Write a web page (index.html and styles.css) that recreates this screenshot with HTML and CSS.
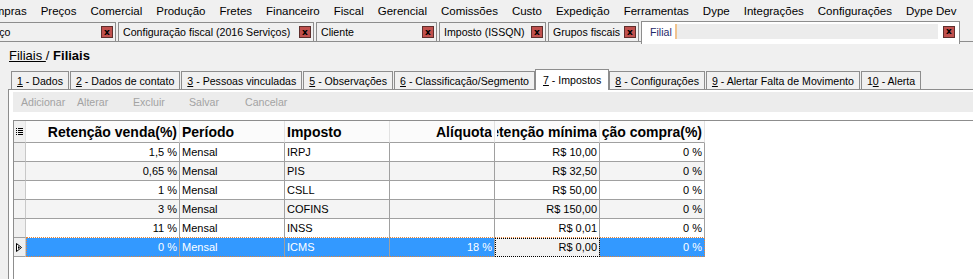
FILE: index.html
```html
<!DOCTYPE html>
<html lang="pt-BR">
<head>
  <meta charset="UTF-8">
  <meta name="viewport" content="width=device-width, initial-scale=1.0">
  <title>Filiais - Impostos</title>
  <link rel="stylesheet" href="styles.css">
</head>
<body>

  <div class="menubar">
    <span>Compras</span>
    <span>Preços</span>
    <span>Comercial</span>
    <span>Produção</span>
    <span>Fretes</span>
    <span>Financeiro</span>
    <span>Fiscal</span>
    <span>Gerencial</span>
    <span>Comissões</span>
    <span>Custo</span>
    <span>Expedição</span>
    <span>Ferramentas</span>
    <span>Dype</span>
    <span>Integrações</span>
    <span>Configurações</span>
    <span>Dype Dev</span>
  </div>

  <div class="doctabs">
    <div class="doctab"><span class="doctab-title">Serviço</span><span class="close">x</span></div>
    <div class="doctab"><span class="doctab-title">Configuração fiscal (2016 Serviços)</span><span class="close">x</span></div>
    <div class="doctab"><span class="doctab-title">Cliente</span><span class="close">x</span></div>
    <div class="doctab"><span class="doctab-title">Imposto (ISSQN)</span><span class="close">x</span></div>
    <div class="doctab"><span class="doctab-title">Grupos fiscais</span><span class="close">x</span></div>
    <div class="doctab active"><span class="doctab-title">Filial</span><span class="masked"></span><span class="close">x</span></div>
  </div>

  <div class="crumb"><a href="#">Filiais </a> / <b>Filiais</b></div>

  <div class="tabs">
    <div class="tab"><span><u>1</u> - Dados</span></div>
    <div class="tab"><span><u>2</u> - Dados de contato</span></div>
    <div class="tab"><span><u>3</u> - Pessoas vinculadas</span></div>
    <div class="tab"><span><u>5</u> - Observações</span></div>
    <div class="tab"><span><u>6</u> - Classificação/Segmento</span></div>
    <div class="tab active"><span><u>7</u> - Impostos</span></div>
    <div class="tab"><span><u>8</u> - Configurações</span></div>
    <div class="tab"><span><u>9</u> - Alertar Falta de Movimento</span></div>
    <div class="tab"><span>1<u>0</u> - Alerta</span></div>
  </div>

  <div class="panel">
    <div class="toolbar">
      <button disabled>Adicionar</button>
      <button disabled>Alterar</button>
      <button disabled>Excluir</button>
      <button disabled>Salvar</button>
      <button disabled>Cancelar</button>
    </div>

    <div class="grid-wrap">
      <table class="grid">
        <colgroup>
          <col class="c-ind"><col class="c-wide"><col><col><col><col><col>
        </colgroup>
        <thead>
          <tr>
            <th class="ind">
              <svg width="8" height="8" viewBox="0 0 8 8">
                <rect x="0" y="0" width="1" height="1" fill="#000"/><rect x="2" y="0" width="5" height="1" fill="#000"/>
                <rect x="0" y="2" width="1" height="1" fill="#000"/><rect x="2" y="2" width="5" height="1" fill="#000"/>
                <rect x="0" y="4" width="1" height="1" fill="#000"/><rect x="2" y="4" width="5" height="1" fill="#000"/>
                <rect x="0" y="6" width="1" height="1" fill="#000"/><rect x="2" y="6" width="5" height="1" fill="#000"/>
              </svg>
            </th>
            <th><div class="hd r">Retenção venda(%)</div></th>
            <th><div class="hd">Período</div></th>
            <th><div class="hd">Imposto</div></th>
            <th><div class="hd r">Alíquota</div></th>
            <th><div class="hd r">Retenção mínima</div></th>
            <th><div class="hd r">Retenção compra(%)</div></th>
          </tr>
        </thead>
        <tbody>
          <tr>
            <td class="ind"></td><td class="r">1,5 %</td><td>Mensal</td><td>IRPJ</td><td class="r"></td><td class="r">R$ 10,00</td><td class="r">0 %</td>
          </tr>
          <tr>
            <td class="ind"></td><td class="r">0,65 %</td><td>Mensal</td><td>PIS</td><td class="r"></td><td class="r">R$ 32,50</td><td class="r">0 %</td>
          </tr>
          <tr>
            <td class="ind"></td><td class="r">1 %</td><td>Mensal</td><td>CSLL</td><td class="r"></td><td class="r">R$ 50,00</td><td class="r">0 %</td>
          </tr>
          <tr>
            <td class="ind"></td><td class="r">3 %</td><td>Mensal</td><td>COFINS</td><td class="r"></td><td class="r">R$ 150,00</td><td class="r">0 %</td>
          </tr>
          <tr class="before-sel">
            <td class="ind"></td><td class="r">11 %</td><td>Mensal</td><td>INSS</td><td class="r"></td><td class="r">R$ 0,01</td><td class="r">0 %</td>
          </tr>
          <tr class="sel">
            <td class="ind">
              <svg width="7" height="9" viewBox="0 0 7 9">
                <polygon points="0.5,0.5 5.5,4.5 0.5,8.5" fill="#fff" stroke="#000" stroke-width="1"/>
                <polygon points="2,3 4,4.5 2,6" fill="#000"/>
              </svg>
            </td>
            <td class="r">0 %</td><td>Mensal</td><td>ICMS</td><td class="r">18 %</td><td class="r focus">R$ 0,00</td><td class="r">0 %</td>
          </tr>
        </tbody>
      </table>
    </div>
  </div>

</body>
</html>
```

FILE: styles.css
```css
* {
  box-sizing: border-box;
}

body {
  margin: 0;
  width: 973px;
  height: 279px;
  overflow: hidden;
  background-color: #f0f0f0;
  font-family: "Liberation Sans", Arial, sans-serif;
  font-size: 11px;
  color: #000;
}

/* menu principal */
.menubar {
  display: flex;
  align-items: center;
  height: 21px;
  margin-left: -27px;
  white-space: nowrap;
  font-size: 11.5px;
}

.menubar span {
  padding: 0 7px;
}

/* abas de documentos */
.doctabs {
  display: flex;
  align-items: flex-end;
  height: 21px;
  margin-left: -30px;
  border-bottom: 1px solid #8d8d8d;
}

.doctab {
  display: flex;
  align-items: center;
  height: 19px;
  margin-right: 2px;
  padding: 0 2px 0 4px;
  border: 1px solid #8d8d8d;
  border-bottom: none;
  font-size: 10.6px;
  white-space: nowrap;
}

.doctab:nth-child(1) { width: 146px; }
.doctab:nth-child(2) { width: 196px; }
.doctab:nth-child(3) { width: 121px; }
.doctab:nth-child(4) { width: 107px; }
.doctab:nth-child(5) { width: 91px; }

.doctab-title {
  flex: 1;
  overflow: hidden;
}

.doctab.active {
  width: 319px;
  height: 23px;
  margin-bottom: -3px;
  padding: 0 4px 3px 8px;
  background-color: #fff;
}

.doctab.active .doctab-title {
  flex: none;
  color: #1f2a6b;
}

.masked {
  width: 263px;
  height: 15px;
  margin-left: 3px;
  border-left: 2px solid #f1c48f;
  background-color: #ececec;
}

.close {
  display: flex;
  align-items: center;
  justify-content: center;
  width: 12px;
  height: 12px;
  margin-left: auto;
  border: 1px solid #5e2e2c;
  background-color: #c0504d;
  font: bold 9px "DejaVu Sans", sans-serif;
  line-height: 1;
}

/* caminho */
.crumb {
  height: 27px;
  padding: 6px 0 0 9px;
  font-size: 13px;
}

.crumb a {
  color: #000;
}

/* abas do cadastro */
.tabs {
  display: flex;
  align-items: flex-end;
  height: 20px;
  padding-left: 11px;
}

.tab {
  display: flex;
  align-items: center;
  height: 18px;
  margin-right: 1px;
  padding: 0 5px;
  border: 1px solid #8d8d8d;
  border-bottom: none;
  background-color: #f0f0f0;
  font-size: 10.6px;
  white-space: nowrap;
  position: relative;
}

.tab.active {
  height: 21px;
  margin: 0 0 -1px -1px;
  padding: 0 7px 1px;
  background-color: #fff;
  z-index: 1;
}

.panel {
  height: 190px;
  margin-left: 8px;
  padding: 2px 0 0 4px;
  border-left: 1px solid #8d8d8d;
  border-top: 1px solid #8d8d8d;
  background-color: #fff;
}

.toolbar {
  display: flex;
  height: 20px;
  background-color: #ececec;
}

.toolbar button {
  width: 56px;
  height: 20px;
  padding: 0 0 0 8px;
  border: none;
  background: none;
  text-align: left;
  color: #a3a3a3;
  font-family: "Liberation Sans", Arial, sans-serif;
  font-size: 10.6px;
}

/* grade */
.grid-wrap {
  height: 170px;
  margin-top: 8px;
  border-top: 1px solid #8d8d8d;
  border-left: 1px solid #8d8d8d;
}

.grid {
  width: 691px;
  table-layout: fixed;
  border-collapse: separate;
  border-spacing: 0;
}

.grid col {
  width: 105px;
}

.grid col.c-ind {
  width: 12px;
}

.grid col.c-wide {
  width: 154px;
}

.grid th {
  height: 22px;
  padding: 0 2px;
  border-right: 1px solid #e2e2e2;
  border-bottom: 1px solid #a0a0a0;
  background-color: #fbfbfb;
  font-size: 14px;
  font-weight: bold;
  text-align: left;
}

.hd {
  display: flex;
  overflow: hidden;
  white-space: nowrap;
}

.hd.r {
  justify-content: flex-end;
}

.grid th.ind {
  padding: 0 0 0 2px;
  background-color: #f0f0f0;
}

.grid th.ind svg {
  display: block;
}

.grid td {
  height: 19px;
  padding: 0 2px;
  border-right: 1px solid #a0a0a0;
  border-bottom: 1px solid #a0a0a0;
  white-space: nowrap;
  overflow: hidden;
}

.grid td.r {
  text-align: right;
}

.grid tbody tr:nth-child(even) td {
  background-color: #f4f4f4;
}

.grid tbody td.ind {
  padding: 0 0 0 2px;
  background-color: #f0f0f0;
  border-right-color: #c8c8c8;
}

.grid td.ind svg {
  display: block;
}

.grid tbody tr.before-sel td:not(.ind) {
  border-bottom: 1px dotted #e0843c;
}

.grid tbody tr.sel td {
  background-color: #3399ff;
  color: #fff;
  border-bottom: 1px dotted #e0843c;
}

.grid tbody tr.sel td.ind {
  background-color: #f0f0f0;
  border-bottom: 1px solid #a0a0a0;
}

.grid tbody tr.sel td:nth-child(2) {
  border-left: 1px dotted #e0843c;
}

.grid tbody tr.sel td:last-child {
  border-right: 1px dotted #e0843c;
}

.grid tbody tr.sel td.focus {
  background-color: #f2f2f2;
  color: #000;
  outline: 1px dotted #000;
  outline-offset: -1px;
}
```
